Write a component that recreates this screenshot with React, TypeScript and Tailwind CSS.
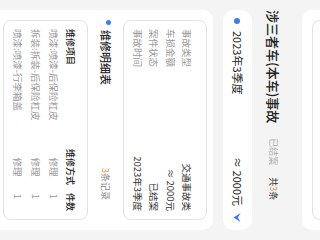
import React from 'react'

const details = [
  { label: '事故类型', value: '交通事故类' },
  { label: '车损金额', value: '≈ 2000元' },
  { label: '案件状态', value: '已结案' },
  { label: '事故时间', value: '2023年3季度' },
]

const repairs = [
  { item: '喷漆:喷漆-后保险杠皮', method: '修理', count: 1 },
  { item: '拆装:拆装-后保险杠皮', method: '修理', count: 1 },
  { item: '喷漆:喷漆-行李箱盖', method: '修理', count: 1 },
]

function Chevron() {
  return (
    <svg width="9" height="8" viewBox="0 0 10 8" className="text-[#3b7de9]">
      <path d="M0 0 L5 8 L10 0 L5 3 Z" fill="currentColor" />
    </svg>
  )
}

export default function App() {
  return (
    <div className="w-[320px] h-[240px] overflow-hidden bg-[#f4f4f4] font-['Noto_Sans_CJK_SC',sans-serif]">
      <div className="w-[240px] h-[320px] origin-top-left [transform:translateX(320px)_rotate(90deg)] bg-[#f4f4f4] flex flex-col">
        {/* previous card, cut off */}
        <div className="mx-[10px] h-[18px] shrink-0 bg-white rounded-b-[10px] px-[10px]">
          <div className="h-[8px] border border-t-0 border-[#e3e3e3] rounded-b-[8px]" />
        </div>

        {/* title row */}
        <div className="flex items-center h-[50px] shrink-0 px-[10px] pt-[6px]">
          <span className="text-[13px] text-[#222] font-medium leading-none">涉三者车(本车)事故</span>
          <span className="ml-[15px] text-[9px] text-[#aaa] leading-none">已结案</span>
          <span className="ml-[12px] text-[9px] text-[#333] leading-none">
            共<span className="text-[#f08a3c]">3</span>条
          </span>
        </div>

        {/* quarter header */}
        <div className="mx-[10px] h-[29px] shrink-0 bg-white rounded-[10px] flex items-center px-[8px]">
          <span className="w-[6px] h-[6px] rounded-full bg-[#3b7de9]" />
          <span className="ml-[7px] text-[11px] text-[#222] leading-none">2023年3季度</span>
          <span className="ml-auto text-[11px] text-[#222] leading-none">≈ 2000元</span>
          <span className="ml-[7px] flex items-center">
            <Chevron />
          </span>
        </div>

        {/* detail card */}
        <div className="mx-[10px] mt-[10px] flex-1 bg-white rounded-t-[10px] px-[10px] pt-[6px]">
          <div className="border border-[#e3e3e3] rounded-[8px] px-[8px] pt-[11px] pb-[7px] h-[84px]">
            {details.map((d) => (
              <div key={d.label} className="flex items-center justify-between h-[16.5px] text-[9.5px] leading-none">
                <span className="text-[#9a9a9a]">{d.label}</span>
                <span className="text-[#333]">{d.value}</span>
              </div>
            ))}
          </div>

          <div className="flex items-center h-[35px] pr-[20px]">
            <span className="w-[5px] h-[5px] rounded-full bg-[#3b7de9] -mt-[6px]" />
            <span className="ml-[5px] text-[11px] text-[#222] font-medium leading-none">维修明细表</span>
            <span className="ml-auto text-[9px] text-[#888] leading-none">
              <span className="text-[#f08a3c]">3</span>条记录
            </span>
          </div>

          <div className="border border-[#e3e3e3] rounded-[8px] px-[8px] pt-[7px] h-[85px]">
            <div className="flex items-center h-[18px] text-[9px] leading-none text-[#222] font-medium whitespace-nowrap">
              <span className="flex-1">维修项目</span>
              <span className="w-[36px] text-center">维修方式</span>
              <span className="w-[26px] text-right">件数</span>
            </div>
            {repairs.map((r, i) => (
              <div key={i} className="flex items-center h-[18px] text-[9.5px] leading-none text-[#999] whitespace-nowrap">
                <span className="flex-1">{r.item}</span>
                <span className="w-[36px] text-center">{r.method}</span>
                <span className="w-[26px] text-right pr-[12px]">{r.count}</span>
              </div>
            ))}
          </div>
        </div>
      </div>
    </div>
  )
}
